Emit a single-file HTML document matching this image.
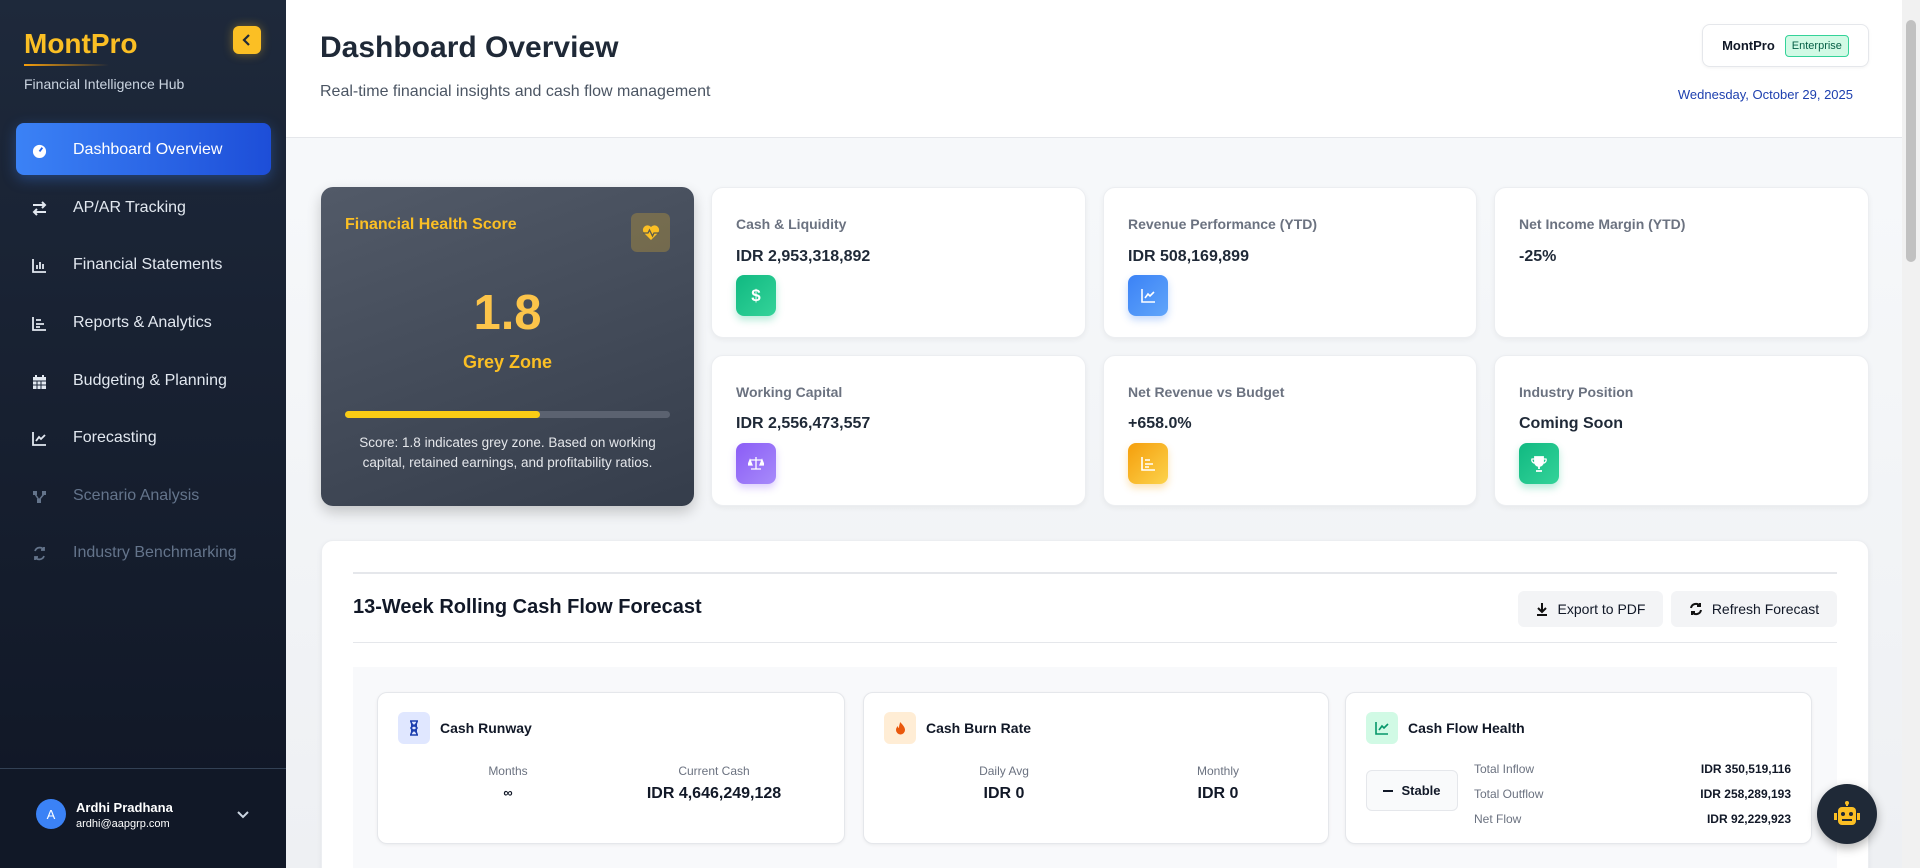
<!DOCTYPE html>
<html style="width:1920px;height:868px;overflow:hidden"><head><meta charset="utf-8"><style>
*{box-sizing:border-box;margin:0;padding:0}
body{width:1920px;height:868px;overflow:hidden;font-family:"Liberation Sans",sans-serif;background:#f3f4f6;position:relative}
.abs{position:absolute}
#sb{left:0;top:0;width:286px;height:868px;background:linear-gradient(180deg,#1e293b,#111827 90%)}
.logo{left:24px;top:28px;font-size:28px;font-weight:bold;color:#fbbf24}
.uline{left:24px;top:64px;width:85px;height:2px;background:linear-gradient(90deg,#f59e0b,rgba(245,158,11,0))}
.coll{left:233px;top:26px;width:28px;height:28px;border-radius:6px;background:#fbbf24;box-shadow:0 0 10px rgba(251,191,36,.4)}
.hub{left:24px;top:76px;font-size:14px;color:#cbd5e1}
.nav{left:16px;width:255px;height:52px;display:flex;align-items:center;font-size:16px;color:#e2e8f0;padding-top:2px}
.nav svg{margin-left:16px;margin-right:26px}
.nav.act{background:linear-gradient(90deg,#3b82f6,#1d4ed8);border-radius:8px;color:#fff;box-shadow:0 4px 14px rgba(59,130,246,.35)}
.nav.dim{color:#64748b}
#main{left:286px;top:0;width:1616px;height:868px;background:linear-gradient(180deg,#f8fafc,#eef0f3);overflow:hidden}
.hdr{left:0;top:0;width:1616px;height:138px;background:#fff;border-bottom:1px solid #e5e7eb}
.card{background:#fff;border-radius:12px;border:1px solid #eceef1;box-shadow:0 2px 6px rgba(0,0,0,.05)}
.lbl{position:absolute;left:24px;top:28px;font-size:14px;font-weight:bold;color:#6b7280}
.val{position:absolute;left:24px;top:60px;font-size:16px;font-weight:bold;color:#1f2937}
.ic{position:absolute;left:24px;top:87px;width:40px;height:41px;border-radius:8px;display:flex;align-items:center;justify-content:center}
.btn{background:#f3f4f6;border-radius:6px;font-size:14px;color:#111827;display:flex;align-items:center;justify-content:center;gap:9px}
.sc{background:#fff;border:1px solid #e5e7eb;border-radius:10px;box-shadow:0 1px 3px rgba(0,0,0,.06)}
.sct{position:absolute;left:20px;top:19px;display:flex;align-items:center;gap:10px;font-size:14px;font-weight:bold;color:#111827}
.sct i{width:32px;height:32px;border-radius:6px;display:flex;align-items:center;justify-content:center}
.cl{position:absolute;font-size:12px;color:#6b7280;text-align:center;width:200px}
.cv{position:absolute;font-size:16px;font-weight:bold;color:#111827;text-align:center;width:200px}
</style></head><body>
<div id="sb" class="abs">
<div class="abs logo">MontPro</div><div class="abs uline"></div>
<div class="abs coll"><svg width="28" height="28"><path d="M16 9l-5 5 5 5" stroke="#1f2937" stroke-width="2.2" fill="none"/></svg></div>
<div class="abs hub">Financial Intelligence Hub</div>
<div class="abs nav act" style="top:123px"><svg width="15" height="15" viewBox="0 0 16 16"><circle cx="8" cy="9" r="7" fill="#fff"/><path d="M8 9l3-4" stroke="#2563eb" stroke-width="2"/></svg>Dashboard Overview</div>
<div class="abs nav" style="top:181px"><svg width="15" height="15"><path d="M1 4h12M10 1l3 3-3 3M14 11H2M5 8l-3 3 3 3" stroke="#e2e8f0" stroke-width="2" fill="none"/></svg>AP/AR Tracking</div>
<div class="abs nav" style="top:238px"><svg width="15" height="15"><path d="M1 1v13h13M5 11V7M8 11V4M11 11V6" stroke="#e2e8f0" stroke-width="1.8" fill="none"/></svg>Financial Statements</div>
<div class="abs nav" style="top:296px"><svg width="15" height="15"><path d="M1 1v13h13M4 4h5M4 8h8M4 11h4" stroke="#e2e8f0" stroke-width="1.8" fill="none"/></svg>Reports &amp; Analytics</div>
<div class="abs nav" style="top:354px"><svg width="15" height="15"><rect x="1" y="3" width="13" height="12" fill="#e2e8f0"/><path d="M4 1v3M11 1v3" stroke="#e2e8f0" stroke-width="2"/><path d="M1 7h13M5 7v8M9 7v8M1 11h13" stroke="#1e293b"/></svg>Budgeting &amp; Planning</div>
<div class="abs nav" style="top:411px"><svg width="15" height="15"><path d="M1 1v13h13M4 10l3-4 2 2 4-4" stroke="#e2e8f0" stroke-width="1.8" fill="none"/></svg>Forecasting</div>
<div class="abs nav dim" style="top:469px"><svg width="15" height="15"><rect x="1" y="2" width="4" height="4" fill="#64748b"/><rect x="10" y="2" width="4" height="4" fill="#64748b"/><rect x="5" y="10" width="4" height="4" fill="#64748b"/><path d="M3 5l4 6M12 5l-5 6" stroke="#64748b" stroke-width="1.5"/></svg>Scenario Analysis</div>
<div class="abs nav dim" style="top:526px"><svg width="15" height="15"><path d="M3 5a5 5 0 0 1 9-1M12 10a5 5 0 0 1-9 1M12 1v3H9M3 14v-3h3" stroke="#64748b" stroke-width="1.8" fill="none"/></svg>Industry Benchmarking</div>
<div class="abs" style="left:0;top:768px;width:286px;height:1px;background:#334155"></div>
<div class="abs" style="left:36px;top:799px;width:30px;height:30px;border-radius:50%;background:#3b82f6;color:#fff;font-size:13px;display:flex;align-items:center;justify-content:center">A</div>
<div class="abs" style="left:76px;top:800px;font-size:13px;font-weight:bold;color:#fff">Ardhi Pradhana</div>
<div class="abs" style="left:76px;top:818px;font-size:11px;color:#fff">ardhi@aapgrp.com</div>
<svg class="abs" style="left:235px;top:807px" width="16" height="16"><path d="M3 5l5 5 5-5" stroke="#cbd5e1" stroke-width="2" fill="none"/></svg>
</div>
<div id="main" class="abs">
<div class="abs hdr">
<div class="abs" style="left:34px;top:31px;font-size:30px;font-weight:bold;color:#1f2937">Dashboard Overview</div>
<div class="abs" style="left:34px;top:83px;font-size:16px;color:#4b5563">Real-time financial insights and cash flow management</div>
<div class="abs" style="left:1416px;top:24px;width:167px;height:43px;border:1px solid #e5e7eb;border-radius:8px;display:flex;align-items:center;justify-content:center;gap:10px;box-shadow:0 1px 3px rgba(0,0,0,.05)"><b style="font-size:13px;color:#111827">MontPro</b><span style="font-size:11px;color:#065f46;background:#d1fae5;border:1px solid #34d399;border-radius:4px;padding:4px 6px">Enterprise</span></div>
<div class="abs" style="left:1340px;top:87px;width:227px;text-align:right;font-size:13px;color:#1e40af">Wednesday, October 29, 2025</div>
</div>
<div class="abs" style="left:35px;top:187px;width:373px;height:319px;border-radius:12px;background:linear-gradient(160deg,#525a68,#353d4b);box-shadow:0 6px 14px rgba(0,0,0,.2)">
<div class="abs" style="left:24px;top:29px;font-size:16px;font-weight:bold;color:#fbbf24">Financial Health Score</div>
<div class="abs" style="left:310px;top:26px;width:39px;height:39px;border-radius:6px;background:rgba(251,191,36,.25);display:flex;align-items:center;justify-content:center"><svg width="18" height="16" viewBox="0 0 18 16"><path d="M9 15L2 8a4 4 0 0 1 7-6 4 4 0 0 1 7 6z" fill="#fbbf24"/><path d="M1 8h5l1.5-3 3 6 1.5-3h5" stroke="#5a5a4c" stroke-width="1.3" fill="none"/></svg></div>
<div class="abs" style="left:0;width:373px;top:76px;text-align:center;font-size:49px;font-weight:bold;color:#fcc44a;line-height:100px">1.8</div>
<div class="abs" style="left:0;width:373px;top:165px;text-align:center;font-size:18px;font-weight:bold;color:#fbbf24">Grey Zone</div>
<div class="abs" style="left:24px;top:224px;width:325px;height:7px;border-radius:4px;background:#5b6270"><div style="width:60%;height:7px;border-radius:4px;background:#facc15"></div></div>
<div class="abs" style="left:24px;width:325px;top:246px;text-align:center;font-size:13.5px;line-height:20px;color:#e5e7eb">Score: 1.8 indicates grey zone. Based on working capital, retained earnings, and profitability ratios.</div>
</div>
<div class="abs card" style="left:425px;top:187px;width:375px;height:151px"><div class="lbl">Cash &amp; Liquidity</div><div class="val">IDR 2,953,318,892</div><div class="ic" style="background:linear-gradient(135deg,#10b981,#34d399);box-shadow:0 4px 8px rgba(16,185,129,.3)"><span style="color:#fff;font-weight:bold;font-size:17px">$</span></div></div>
<div class="abs card" style="left:817px;top:187px;width:374px;height:151px"><div class="lbl">Revenue Performance (YTD)</div><div class="val">IDR 508,169,899</div><div class="ic" style="background:linear-gradient(135deg,#3b82f6,#60a5fa);box-shadow:0 4px 8px rgba(59,130,246,.3)"><svg width="15" height="15"><path d="M1 1v13h13M4 10l3-4 2 2 4-4" stroke="#fff" stroke-width="1.6" fill="none"/></svg></div></div>
<div class="abs card" style="left:1208px;top:187px;width:375px;height:151px"><div class="lbl">Net Income Margin (YTD)</div><div class="val">-25%</div></div>
<div class="abs card" style="left:425px;top:355px;width:375px;height:151px"><div class="lbl">Working Capital</div><div class="val" style="top:59px">IDR 2,556,473,557</div><div class="ic" style="background:linear-gradient(135deg,#8b5cf6,#a78bfa);box-shadow:0 4px 8px rgba(139,92,246,.3)"><svg width="16" height="15"><path d="M8 1v12M3 13h10M2 4h12M2 4l-2 5h4zM14 4l-2 5h4z" stroke="#fff" stroke-width="1.3" fill="#fff"/></svg></div></div>
<div class="abs card" style="left:817px;top:355px;width:374px;height:151px"><div class="lbl">Net Revenue vs Budget</div><div class="val" style="top:59px">+658.0%</div><div class="ic" style="background:linear-gradient(135deg,#f59e0b,#fcd34d);box-shadow:0 4px 8px rgba(245,158,11,.3)"><svg width="15" height="15"><path d="M1 1v13h13M4 4h5M4 8h8M4 11h4" stroke="#fff" stroke-width="1.6" fill="none"/></svg></div></div>
<div class="abs card" style="left:1208px;top:355px;width:375px;height:151px"><div class="lbl">Industry Position</div><div class="val" style="top:59px">Coming Soon</div><div class="ic" style="background:linear-gradient(135deg,#10b981,#34d399);box-shadow:0 4px 8px rgba(16,185,129,.3)"><svg width="16" height="16"><path d="M4 1h8v5a4 4 0 0 1-8 0zM8 10v3M5 15h6" stroke="#fff" stroke-width="1.8" fill="#fff"/><path d="M4 3H1a3 3 0 0 0 3 4M12 3h3a3 3 0 0 1-3 4" stroke="#fff" stroke-width="1.3" fill="none"/></svg></div></div>
<div class="abs card" style="left:35px;top:540px;width:1548px;height:360px;overflow:hidden">
<div class="abs" style="left:31px;top:31px;width:1484px;height:2px;background:#e5e7eb"></div>
<div class="abs" style="left:31px;top:55px;font-size:20px;font-weight:bold;color:#111827">13-Week Rolling Cash Flow Forecast</div>
<div class="abs btn" style="left:1196px;top:50px;width:145px;height:36px"><svg width="13" height="14"><path d="M6 1v8M2 6l4 4 4-4M1 13h10" stroke="#111" stroke-width="2" fill="none"/></svg>Export to PDF</div>
<div class="abs btn" style="left:1349px;top:50px;width:166px;height:36px"><svg width="14" height="14"><path d="M2 6a5 5 0 0 1 9-2M12 8a5 5 0 0 1-9 2M11 1v3H8M3 13v-3h3" stroke="#111" stroke-width="2" fill="none"/></svg>Refresh Forecast</div>
<div class="abs" style="left:31px;top:101px;width:1484px;height:1px;background:#e5e7eb"></div>
<div class="abs" style="left:31px;top:126px;width:1484px;height:240px;background:#f8f9fb"></div>
<div class="abs sc" style="left:55px;top:151px;width:468px;height:152px">
<div class="sct"><i style="background:#e0e7ff"><svg width="10" height="16"><path d="M1 1h8M1 15h8M2 1c0 5 6 5 6 7s-6 2-6 7M8 1c0 5-6 5-6 7s6 2 6 7" stroke="#1e40af" stroke-width="1.6" fill="#1e40af"/></svg></i>Cash Runway</div>
<div class="cl" style="left:30px;top:71px">Months</div><div class="cv" style="left:30px;top:92px;font-size:13px">∞</div>
<div class="cl" style="left:236px;top:71px">Current Cash</div><div class="cv" style="left:236px;top:92px">IDR 4,646,249,128</div></div>
<div class="abs sc" style="left:541px;top:151px;width:466px;height:152px">
<div class="sct"><i style="background:#ffedd5"><svg width="11" height="14"><path d="M5 1c4 4 5 6 5 8a4.5 4.5 0 0 1-9 0c0-2 1-3 2-4 0 2 1 2 1 2 0-3 1-4 1-6z" fill="#ea580c"/></svg></i>Cash Burn Rate</div>
<div class="cl" style="left:40px;top:71px">Daily Avg</div><div class="cv" style="left:40px;top:92px">IDR 0</div>
<div class="cl" style="left:254px;top:71px">Monthly</div><div class="cv" style="left:254px;top:92px">IDR 0</div></div>
<div class="abs sc" style="left:1023px;top:151px;width:467px;height:152px">
<div class="sct"><i style="background:#d1fae5"><svg width="14" height="14"><path d="M1 1v12h12M4 9l3-4 2 2 4-4" stroke="#059669" stroke-width="1.6" fill="none"/></svg></i>Cash Flow Health</div>
<div class="abs" style="left:20px;top:77px;width:92px;height:41px;border:1px solid #e5e7eb;border-radius:6px;background:#f9fafb;display:flex;align-items:center;justify-content:center;gap:8px;font-size:13px;font-weight:bold;color:#111827"><span style="width:10px;height:2px;background:#111827"></span>Stable</div>
<div class="abs" style="left:128px;top:64px;font-size:12px;color:#6b7280;line-height:25px">Total Inflow<br>Total Outflow<br>Net Flow</div>
<div class="abs" style="right:20px;top:64px;font-size:12px;font-weight:bold;color:#111827;line-height:25px;text-align:right">IDR 350,519,116<br>IDR 258,289,193<br>IDR 92,229,923</div></div>
</div>
<div class="abs" style="left:1531px;top:784px;width:60px;height:60px;border-radius:50%;background:#1f2937;box-shadow:0 4px 10px rgba(0,0,0,.3);display:flex;align-items:center;justify-content:center"><svg width="28" height="26" viewBox="0 0 28 26"><path d="M14 1v4" stroke="#fbbf24" stroke-width="2"/><circle cx="14" cy="2" r="2" fill="#fbbf24"/><rect x="5" y="6" width="18" height="18" rx="4" fill="#fbbf24"/><rect x="1" y="12" width="3" height="7" fill="#fbbf24"/><rect x="24" y="12" width="3" height="7" fill="#fbbf24"/><circle cx="10" cy="13" r="2" fill="#1f2937"/><circle cx="18" cy="13" r="2" fill="#1f2937"/><rect x="9" y="18" width="10" height="2" fill="#1f2937"/></svg></div>
</div>
<div class="abs" style="left:1902px;top:0;width:18px;height:868px;background:#f1f1f1"><div style="position:absolute;left:4px;top:20px;width:10px;height:242px;border-radius:5px;background:#c1c1c1"></div></div>
</body></html>
